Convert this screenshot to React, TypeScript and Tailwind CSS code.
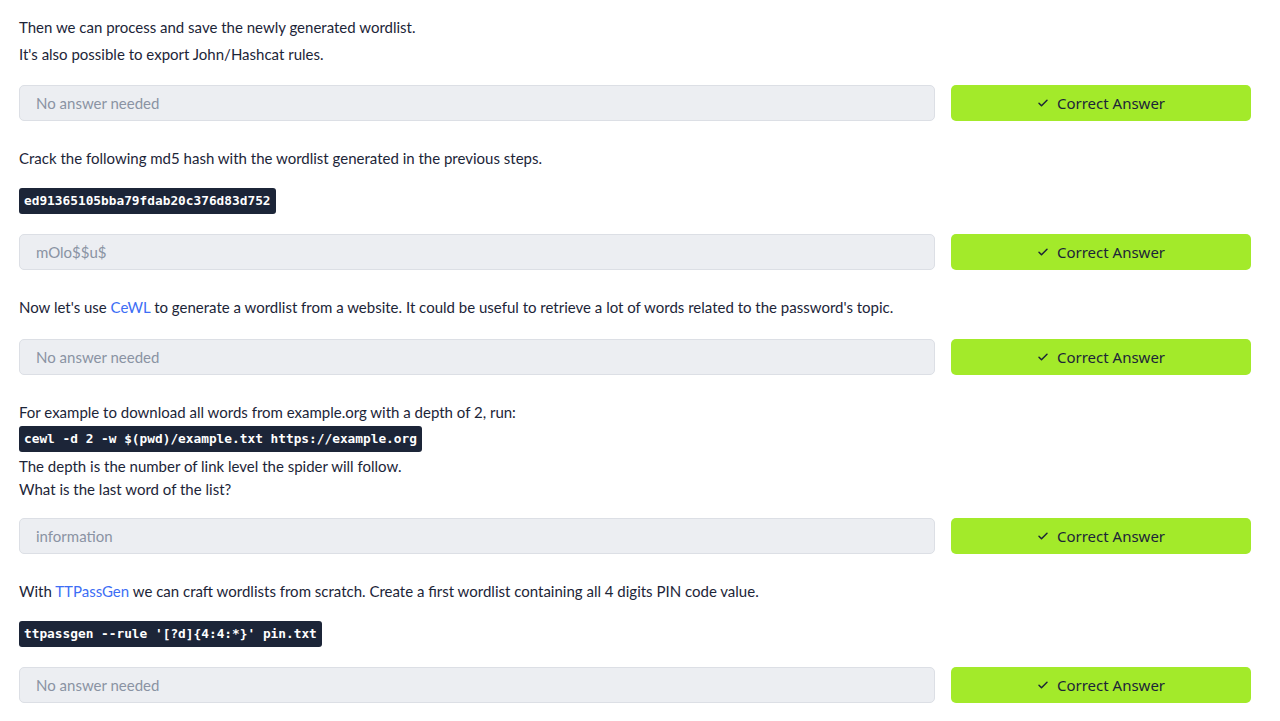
import React from "react";

const body = { fontFamily: "Lato, 'Noto Sans', sans-serif" };

function Check() {
  return (
    <svg width="12" height="12" viewBox="0 0 24 24" fill="none" stroke="#1c2538" strokeWidth="3" strokeLinecap="round" strokeLinejoin="round">
      <path d="M4 12.5l5 5L20 6.5" />
    </svg>
  );
}

function AnswerRow({ value, className = "" }: { value: string; className?: string }) {
  return (
    <div className={`flex gap-4 ${className}`}>
      <div className="flex-1 h-[36px] rounded-[5px] border border-[#dcdfe5] bg-[#eceef2] flex items-center px-[16px] text-[15px] text-[#8a93a3]" style={body}>
        {value}
      </div>
      <button className="w-[300px] h-[36px] rounded-[5px] bg-[#a3ea2a] flex items-center justify-center gap-[8px] text-[15px] text-[#1c2538]" style={{ fontFamily: "'Noto Sans', sans-serif" }}>
        <Check />
        <span>Correct Answer</span>
      </button>
    </div>
  );
}

function Code({ children, className = "" }: { children: React.ReactNode; className?: string }) {
  return (
    <span
      className={`inline-flex items-center h-[26px] px-[5px] rounded-[3px] bg-[#1c2538] text-white font-bold text-[12.8px] whitespace-pre ${className}`}
      style={{ fontFamily: "'DejaVu Sans Mono', monospace" }}
    >
      {children}
    </span>
  );
}

export default function App() {
  return (
    <div className="w-[1280px] h-[721px] bg-white overflow-hidden px-[19px] text-[#1c2538] text-[15px]" style={body}>
      <div className="w-[1232px]">
        <p className="leading-[27px] mt-[14px]">Then we can process and save the newly generated wordlist.</p>
        <p className="leading-[27px]">It's also possible to export John/Hashcat rules.</p>
        <AnswerRow value="No answer needed" className="mt-[17px]" />

        <p className="leading-[24px] mt-[25px]">Crack the following md5 hash with the wordlist generated in the previous steps.</p>
        <div className="mt-[18px] flex">
          <Code>ed91365105bba79fdab20c376d83d752</Code>
        </div>
        <AnswerRow value="mOlo$$u$" className="mt-[20px]" />

        <p className="leading-[24px] mt-[25px]">
          Now let's use <span className="text-[#3d6ef5]">CeWL</span> to generate a wordlist from a website. It could be useful to retrieve a lot of words related to the password's topic.
        </p>
        <AnswerRow value="No answer needed" className="mt-[20px]" />

        <p className="leading-[23px] mt-[26px]">For example to download all words from example.org with a depth of 2, run:</p>
        <div className="mt-[2px] flex">
          <Code>cewl -d 2 -w $(pwd)/example.txt https://example.org</Code>
        </div>
        <p className="leading-[23px] mt-[3px]">The depth is the number of link level the spider will follow.</p>
        <p className="leading-[23px]">What is the last word of the list?</p>
        <AnswerRow value="information" className="mt-[17px]" />

        <p className="leading-[24px] mt-[25px]">
          With <span className="text-[#3d6ef5]">TTPassGen</span> we can craft wordlists from scratch. Create a first wordlist containing all 4 digits PIN code value.
        </p>
        <div className="mt-[18px] flex">
          <Code>ttpassgen --rule '[?d]{"{"}4:4:*{"}"}' pin.txt</Code>
        </div>
        <AnswerRow value="No answer needed" className="mt-[20px]" />
      </div>
    </div>
  );
}
